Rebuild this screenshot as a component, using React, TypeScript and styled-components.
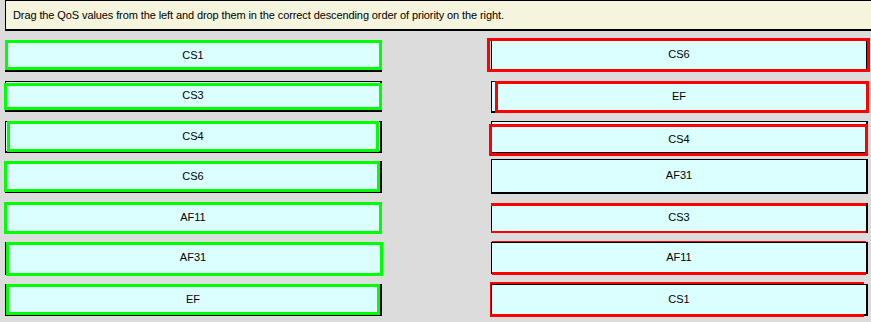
import styled, { createGlobalStyle } from 'styled-components';

const GlobalStyle = createGlobalStyle`
  html, body {
    margin: 0;
    padding: 0;
    background: #dcdcdc;
  }
  body {
    font-family: "Liberation Sans", Arial, sans-serif;
    width: 871px;
    height: 322px;
    overflow: hidden;
  }
`;

// sides: top right bottom left border widths of the highlight
type Frame = { x: number; y: number; w: number; h: number; sides?: [number, number, number, number] };

interface Item {
  label: string;
  top: number;
  height: number;
  shift?: number;
  frame?: Frame;
}

const leftItems: Item[] = [
  { label: 'CS1', top: 10, height: 31, frame: { x: 0, y: -1, w: 377, h: 30 } },
  { label: 'CS3', top: 9, height: 31, frame: { x: -1, y: 2, w: 378, h: 27 } },
  { label: 'CS4', top: 9, height: 32, frame: { x: 2, y: 0, w: 372, h: 31 } },
  { label: 'CS6', top: 8, height: 32, frame: { x: -1, y: 0, w: 376, h: 31 } },
  { label: 'AF11', top: 9, height: 32, frame: { x: -1, y: 0, w: 378, h: 32 } },
  { label: 'AF31', top: 8, height: 33, frame: { x: 1, y: 0, w: 377, h: 34 } },
  { label: 'EF', top: 9, height: 32, frame: { x: 1, y: 0, w: 374, h: 31 } },
];

const rightItems: Item[] = [
  { label: 'CS6', top: 8, height: 32, frame: { x: -4, y: -1, w: 383, h: 34 } },
  { label: 'EF', top: 10, height: 32, frame: { x: 4, y: 0, w: 374, h: 32 } },
  { label: 'CS4', top: 8, height: 33, shift: 3, frame: { x: -2, y: 3, w: 379, h: 32 } },
  { label: 'AF31', top: 5, height: 35 },
  { label: 'CS3', top: 9, height: 30, frame: { x: 0, y: 0, w: 375, h: 30, sides: [3, 0, 2, 0] } },
  { label: 'AF11', top: 9, height: 32, frame: { x: 1, y: -1, w: 374, h: 34, sides: [1, 0, 3, 0] } },
  { label: 'CS1', top: 10, height: 32, frame: { x: -1, y: -2, w: 374, h: 35, sides: [2, 0, 3, 1] } },
];

const Page = styled.div`
  display: flex;
  flex-direction: column;
`;

const Instructions = styled.div`
  margin-left: 5px;
  width: 859px;
  height: 28px;
  box-sizing: content-box;
  background: #f5f4dc;
  border-style: solid;
  border-color: #000;
  border-width: 1px 2px 2px 1px;
  display: flex;
  align-items: center;
  padding-left: 7px;
  font-size: 11px;
  letter-spacing: -0.1px;
  color: #000;
`;

const Columns = styled.div`
  display: grid;
  grid-template-columns: 377px 377px;
  column-gap: 109px;
  padding-left: 5px;
`;

const Column = styled.div`
  display: flex;
  flex-direction: column;
`;

const Slot = styled.div<{ $top: number; $height: number }>`
  position: relative;
  margin-top: ${(p) => p.$top}px;
  height: ${(p) => p.$height}px;
  width: 377px;
  box-sizing: border-box;
  background: #dbffff;
  border-style: solid;
  border-color: #000;
  border-width: 1px 2px 2px 1px;
  display: flex;
  align-items: center;
  justify-content: center;
  font-size: 11px;
  color: #000;
`;

const Highlight = styled.div<{ $color: string; $f: Frame }>`
  position: absolute;
  left: ${(p) => p.$f.x - 1}px;
  top: ${(p) => p.$f.y - 1}px;
  width: ${(p) => p.$f.w}px;
  height: ${(p) => p.$f.h}px;
  box-sizing: border-box;
  border: 0 solid ${(p) => p.$color};
  border-width: ${(p) => (p.$f.sides ?? [3, 3, 3, 3]).map((s) => `${s}px`).join(' ')};
  pointer-events: none;
`;

const Label = styled.span<{ $shift: number }>`
  position: relative;
  z-index: 1;
  top: ${(p) => p.$shift - 1}px;
`;

function ItemList({ items, color }: { items: Item[]; color: string }) {
  return (
    <Column>
      {items.map((it) => (
        <Slot key={it.label} $top={it.top} $height={it.height}>
          <Label $shift={it.shift ?? 0}>{it.label}</Label>
          {it.frame && <Highlight $color={color} $f={it.frame} />}
        </Slot>
      ))}
    </Column>
  );
}

export default function App() {
  return (
    <Page>
      <GlobalStyle />
      <Instructions>
        Drag the QoS values from the left and drop them in the correct descending order of priority on the right.
      </Instructions>
      <Columns>
        <ItemList items={leftItems} color="#00ff00" />
        <ItemList items={rightItems} color="#ff0000" />
      </Columns>
    </Page>
  );
}
